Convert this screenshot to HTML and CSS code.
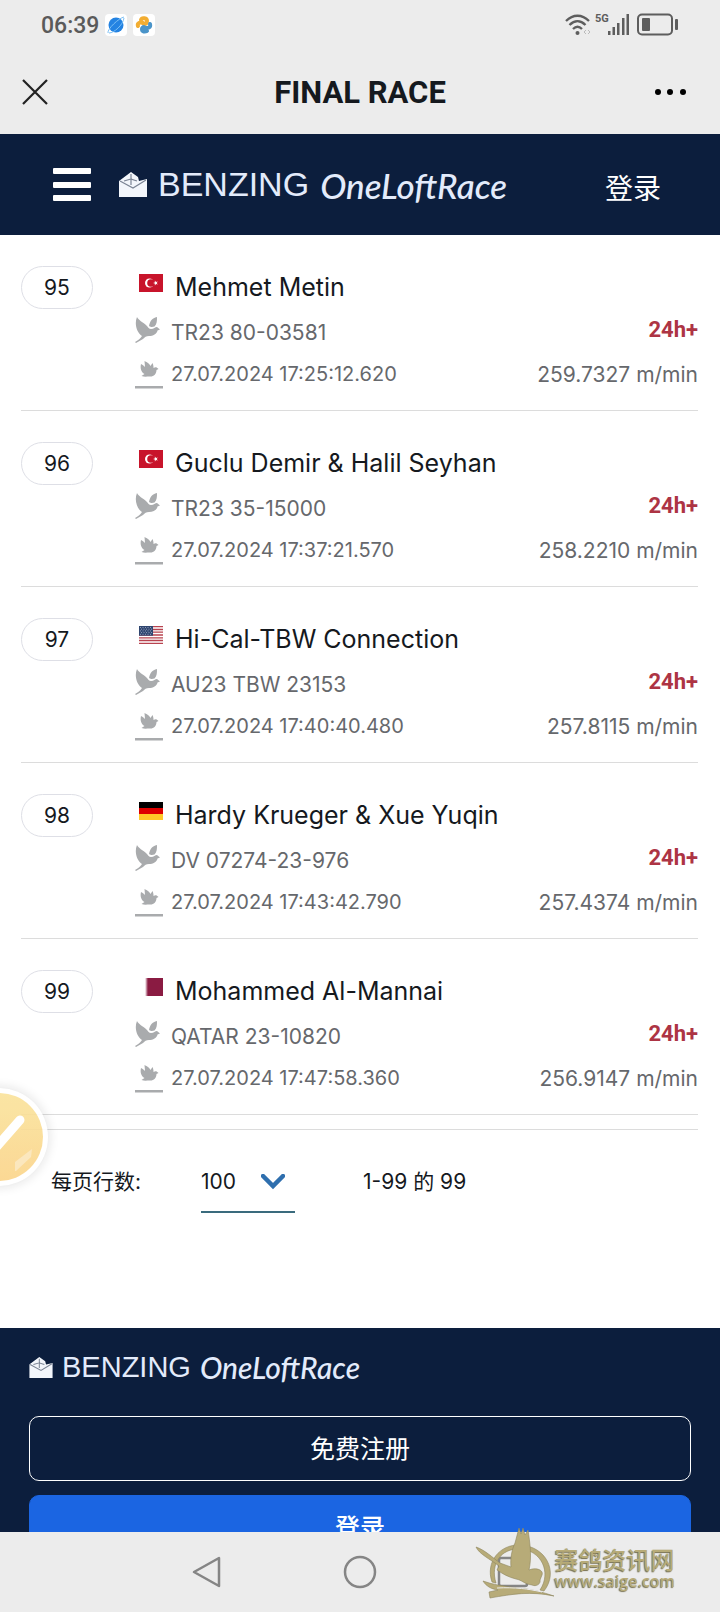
FILE: index.html
```html
<!DOCTYPE html>
<html lang="zh-CN">
<head>
<meta charset="utf-8">
<meta name="viewport" content="width=device-width, initial-scale=1">
<title>FINAL RACE</title>
<link rel="stylesheet" href="styles.css">
</head>
<body>
<svg class="symbols" aria-hidden="true">
  <symbol id="dove" viewBox="0 0 25 26">
    <path d="M2 0c1 3 6 5 10 9 1 1 2 3 4 3 3 0 4-2 6-2l3 2.500-2.500 1C22 17 18 19 14 19c-3 0-4 1-6 3l-7 4-1-1c3-2 5-3 7-6C2 16-1 7 2 0z"/>
    <path d="M22 0c0 4 0 7-2.500 9.500-2 .5-3 1-5.500-.5C15 4 17 1 22 0z"/>
  </symbol>
  <symbol id="landing" viewBox="0 0 28 29">
    <path d="M6 4c2 1 3 2 4 3l-.5-6c4 2 5 3 6 5l2-3c1 2 1 4 1 5 2-1 3-1 5 1l-2 1c0 4-3 7-7 6.500-3 0-5 .5-8-.5l3-2C6 12 5 8 6 4z"/>
    <path d="M0 26h28v2.500H0z"/>
  </symbol>
  <symbol id="turkey" viewBox="0 0 24 18">
    <path fill="#c8142b" d="M0 0h24v18H0z"/>
    <circle cx="10.500" cy="9" r="4.500" fill="#fff"/>
    <circle cx="12" cy="9" r="3.800" fill="#c8142b"/>
    <path fill="#fff" d="M14 9l1.800-.6.100-1.900 1.100 1.500 1.800-.6L17.700 9l1.100 1.600-1.800-.6-1.100 1.500-.1-1.900z"/>
  </symbol>
  <symbol id="usa" viewBox="0 0 24 18">
    <path fill="#fff" d="M0 0h24v18H0z"/>
    <path stroke="#b8434f" stroke-width="1.300" d="M0 .7h24M0 3.500h24M0 6.200h24M0 9h24M0 11.800h24M0 14.500h24M0 17.300h24"/>
    <path fill="#2f4670" d="M0 0h14v9.700H0z"/>
    <path stroke="#a9b4cc" stroke-width=".8" stroke-dasharray="1 1.500" d="M1 1.500h12.500M2 3.200h11.500M1 4.900h12.500M2 6.600h11.500M1 8.300h12.500"/>
  </symbol>
  <symbol id="germany" viewBox="0 0 24 18">
    <path d="M0 0h24v6H0z"/><path fill="#d00" d="M0 6h24v6H0z"/><path fill="#ffc928" d="M0 12h24v6H0z"/>
  </symbol>
  <symbol id="qatar" viewBox="0 0 24 18">
    <path fill="#fff" d="M0 0h24v18H0z"/>
    <path fill="#8a1b42" d="M24 0H6l3 1-3 1 3 1-3 1 3 1-3 1 3 1-3 1 3 1-3 1 3 1-3 1 3 1-3 1 3 1-3 1 3 1-3 1h18z"/>
  </symbol>
  <symbol id="loft" viewBox="0 0 28 25">
    <path fill="#f3f6fb" d="M0 9L12 0l7 5 1 4 8-2v18H0z"/>
    <path fill="none" stroke="#7b8494" stroke-width="1.200" d="M1 9l13 7 13-8M5 9l7-2v6M12 2v5l6 2"/>
  </symbol>
</svg>

<div class="screen">
  <div class="status">
    <span class="clock">06:39</span>
    <svg class="app" viewBox="0 0 22 22" aria-hidden="true"><rect width="22" height="22" rx="4" fill="#fff"/><circle cx="11" cy="11" r="7.500" fill="#2483e2"/><path d="M3 19c-1-4 11-15 16-16M4 19c5 0 14-8 15-15" fill="none" stroke="#7cc0f5" stroke-width="1"/></svg>
    <svg class="app" viewBox="0 0 22 22" aria-hidden="true"><rect width="22" height="22" rx="4" fill="#fff"/><g fill="none" stroke-width="4" stroke-linecap="round"><path stroke="#f2ad32" d="M5 12c-1-3 2-4 5-3M8 6c1-3 6-2 6 1 0 2-1 3-3 3"/><path stroke="#4a94c9" d="M17 10c1 4-2 4-5 4M14 17c-2 1-5 1-5-2 0-1 1-2 2-2"/></g></svg>
    <svg class="signals" viewBox="0 0 114 24" role="img" aria-label="Wi-Fi, 5G, battery low">
      <g fill="none" stroke="#5d5d5d" stroke-width="2.300"><path d="M1 8c7-7 16-7 23 0M4.500 12c5-5 11-5 16 0M8 16c3-3 6-3 9 0"/><rect x="73" y="1.500" width="34" height="20" rx="4" stroke-width="2"/></g>
      <g fill="#5d5d5d"><circle cx="12.500" cy="20" r="2"/><path d="M43 18h2.500v4H43zM47.500 14H50v8h-2.500zM52 10h2.500v12H52zM57 5h2.500v17H57zM61.500 1H64v21h-2.500z"/><rect x="77" y="5" width="8" height="13" rx="1"/><rect x="110" y="6" width="3" height="11" rx="1"/></g>
      <path fill="none" stroke="#bbb" d="M21 17l-2 2 2 2M23 17l2 2-2 2"/>
      <text class="network" x="30" y="9">5G</text>
    </svg>
  </div>

  <header class="titlebar">
    <button class="icon-button" aria-label="关闭"><svg width="26" height="26" viewBox="0 0 26 26"><path d="M1 1l24 24M25 1L1 25" stroke="#222" stroke-width="2.200"/></svg></button>
    <h1>FINAL RACE</h1>
    <button class="icon-button more" aria-label="更多"><svg width="32" height="8" viewBox="0 0 32 8"><circle cx="4" cy="4" r="3"/><circle cx="16" cy="4" r="3"/><circle cx="29" cy="4" r="3"/></svg></button>
  </header>

  <nav class="sitebar">
    <button class="icon-button" aria-label="菜单"><svg width="38" height="34" viewBox="0 0 38 34" fill="#fff"><rect width="38" height="6" rx="1"/><rect y="14" width="38" height="6" rx="1"/><rect y="27" width="38" height="6" rx="1"/></svg></button>
    <a class="logo" href="#"><svg viewBox="0 0 28 25" aria-hidden="true"><use href="#loft"/></svg><span>BENZING</span><span class="script">OneLoftRace</span></a>
    <a class="login" href="#">登录</a>
  </nav>

  <main class="content">
    <ol class="results">
      <li class="result">
        <span class="rank">95</span>
        <div class="details">
          <h2 class="line name"><svg class="flag" role="img" aria-label="TR"><use href="#turkey"/></svg>Mehmet Metin</h2>
          <div class="line ring"><svg class="dove" aria-hidden="true"><use href="#dove"/></svg><span>TR23 80-03581</span><strong>24h+</strong></div>
          <div class="line time"><svg class="landing" aria-hidden="true"><use href="#landing"/></svg><time>27.07.2024 17:25:12.620</time><span class="speed">259.7327 m/min</span></div>
        </div>
      </li>
      <li class="result">
        <span class="rank">96</span>
        <div class="details">
          <h2 class="line name"><svg class="flag" role="img" aria-label="TR"><use href="#turkey"/></svg>Guclu Demir &amp; Halil Seyhan</h2>
          <div class="line ring"><svg class="dove" aria-hidden="true"><use href="#dove"/></svg><span>TR23 35-15000</span><strong>24h+</strong></div>
          <div class="line time"><svg class="landing" aria-hidden="true"><use href="#landing"/></svg><time>27.07.2024 17:37:21.570</time><span class="speed">258.2210 m/min</span></div>
        </div>
      </li>
      <li class="result">
        <span class="rank">97</span>
        <div class="details">
          <h2 class="line name"><svg class="flag" role="img" aria-label="US"><use href="#usa"/></svg>Hi-Cal-TBW Connection</h2>
          <div class="line ring"><svg class="dove" aria-hidden="true"><use href="#dove"/></svg><span>AU23 TBW 23153</span><strong>24h+</strong></div>
          <div class="line time"><svg class="landing" aria-hidden="true"><use href="#landing"/></svg><time>27.07.2024 17:40:40.480</time><span class="speed">257.8115 m/min</span></div>
        </div>
      </li>
      <li class="result">
        <span class="rank">98</span>
        <div class="details">
          <h2 class="line name"><svg class="flag" role="img" aria-label="DE"><use href="#germany"/></svg>Hardy Krueger &amp; Xue Yuqin</h2>
          <div class="line ring"><svg class="dove" aria-hidden="true"><use href="#dove"/></svg><span>DV 07274-23-976</span><strong>24h+</strong></div>
          <div class="line time"><svg class="landing" aria-hidden="true"><use href="#landing"/></svg><time>27.07.2024 17:43:42.790</time><span class="speed">257.4374 m/min</span></div>
        </div>
      </li>
      <li class="result">
        <span class="rank">99</span>
        <div class="details">
          <h2 class="line name"><svg class="flag" role="img" aria-label="QA"><use href="#qatar"/></svg>Mohammed Al-Mannai</h2>
          <div class="line ring"><svg class="dove" aria-hidden="true"><use href="#dove"/></svg><span>QATAR 23-10820</span><strong>24h+</strong></div>
          <div class="line time"><svg class="landing" aria-hidden="true"><use href="#landing"/></svg><time>27.07.2024 17:47:58.360</time><span class="speed">256.9147 m/min</span></div>
        </div>
      </li>
    </ol>

    <div class="pagination">
      <label for="rows">每页行数:</label>
      <div class="picker">
        <select id="rows"><option>100</option></select>
        <svg width="24" height="16" viewBox="0 0 24 16" aria-hidden="true"><path d="M2 2l10 10L22 2" fill="none" stroke="#2f6fae" stroke-width="4.500" stroke-linecap="round"/></svg>
      </div>
      <span>1-99 的 99</span>
    </div>

    <footer class="footer">
      <a class="logo small" href="#"><svg viewBox="0 0 28 25" aria-hidden="true"><use href="#loft"/></svg><span>BENZING</span><span class="script">OneLoftRace</span></a>
      <button class="action outline">免费注册</button>
      <button class="action primary">登录</button>
    </footer>
  </main>

  <div class="system">
    <button class="icon-button" aria-label="返回"><svg width="34" height="34" viewBox="0 0 34 34"><path d="M29 3v28L4 17z"/></svg></button>
    <button class="icon-button" aria-label="主页"><svg width="34" height="34" viewBox="0 0 34 34"><circle cx="17" cy="17" r="15"/></svg></button>
    <button class="icon-button" aria-label="最近"><svg width="34" height="34" viewBox="0 0 34 34"><rect x="3" y="3" width="28" height="28" rx="2"/></svg></button>
  </div>

  <button class="floating" aria-label="完成"><svg viewBox="0 0 98 98"><defs><linearGradient id="sun" x2="0" y2="1"><stop stop-color="#fae39b"/><stop offset="1" stop-color="#fbd489"/></linearGradient></defs><circle cx="49" cy="49" r="44" fill="url(#sun)"/><path d="M30 48l13 15 27-31" fill="none" stroke="#fff" stroke-width="9" stroke-linecap="round"/><path d="M65 83V74l17-13-1 8-15 14z" fill="#fbe5b8"/></svg></button>

  <div class="watermark">
    <svg width="80" height="72" viewBox="0 0 80 72" aria-hidden="true">
      <g fill="#b7ab78" stroke="#8d845d" stroke-width=".6">
        <path fill-rule="evenodd" d="M17 54C10 34 25 16 45 17c26 1 39 27 24 46l-4-1c12-18 1-40-20-41-19-1-30 15-24 34z"/>
        <path d="M1 19c9 3 17 11 24 16l11 4c-1-8 1-18 4-24l4-15 2 6 2-6 2 7 3-5c2 13 4 27 1 40 7-3 15 0 13 5l-2 5c1 4-4 7-8 5-8-1-10-5-16-6-8-2-13-5-19-9l2-4C15 31 4 26 1 19z"/>
        <path d="M8 53c10 4 22 5 34 7 14 1 25 4 37 8-24-5-41-2-64 2l-1-6 9-2c-7-1-12-4-15-9z"/>
      </g>
      <path d="M22 60c18-1 32 1 45 4" fill="none" stroke="#ececec"/>
    </svg>
    <div class="watermark-text"><span class="watermark-name">赛鸽资讯网</span><span class="watermark-url">www.saige.com</span></div>
  </div>
</div>
</body>
</html>
```

FILE: styles.css
```css
* { box-sizing: border-box; }

body {
  margin: 0;
  background: #ececec;
  color: #15191e;
  font-family: Inter, "Noto Sans CJK SC", sans-serif;
  font-size: 21px;
}

button { font: inherit; cursor: pointer; }
a { color: inherit; text-decoration: none; }
svg { flex: none; }

.symbols { position: absolute; width: 0; height: 0; }

.screen {
  position: relative;
  display: flex;
  flex-direction: column;
  height: 100vh;
  overflow: hidden;
}

.icon-button {
  display: flex;
  padding: 0;
  border: 0;
  background: none;
}

.status {
  display: flex;
  align-items: center;
  gap: 6px;
  height: 50px;
  padding: 0 41px;
}

.clock {
  color: #5a5a5a;
  font: 500 23px Roboto, sans-serif;
}

.app { width: 22px; height: 22px; }
.signals { width: 114px; height: 24px; margin-left: auto; }
.network { fill: #5d5d5d; font: 700 11px Roboto, sans-serif; }

.titlebar {
  display: grid;
  grid-template-columns: 1fr auto 1fr;
  align-items: center;
  height: 84px;
  padding: 0 22px;
}

.titlebar h1 {
  margin: 0;
  font: 700 31px Roboto, sans-serif;
}

.more {
  justify-self: end;
  padding: 12px;
}

.sitebar {
  display: flex;
  align-items: center;
  height: 101px;
  padding: 0 59px 0 53px;
  background: #0c1e3d;
  color: #fff;
}

.logo {
  display: flex;
  align-items: center;
  gap: 11px;
  margin-left: 28px;
  color: #e3ebfb;
  font: 34px "Liberation Sans", sans-serif;
}

.logo svg { width: 28px; height: 25px; }
.logo .script { font: italic 500 35px Lato, cursive; }

.login {
  margin-left: auto;
  padding-top: 4px;
  font-size: 28px;
}

.content {
  flex: 1;
  min-height: 0;
  overflow: hidden;
  background: #fff;
}

.results {
  margin: 0;
  padding: 0 22px 0 21px;
  list-style: none;
}

.result {
  display: flex;
  align-items: flex-start;
  justify-content: space-between;
  padding: 31px 0 18px;
  border-bottom: 1px solid #dcdcdc;
}

.rank {
  width: 72px;
  border: 1px solid #dedfe6;
  border-radius: 22px;
  line-height: 41px;
  text-align: center;
}

.details {
  flex: 1;
  margin-left: 42px;
}

.line {
  display: flex;
  align-items: center;
  color: #66686c;
}

.name {
  gap: 12px;
  height: 42px;
  margin: 0;
  padding-left: 4px;
  color: #15191e;
  font-size: 25px;
  font-weight: 400;
}

.flag { width: 24px; height: 18px; margin-bottom: 9px; }

.ring { gap: 11px; height: 48px; }
.ring strong {
  margin-left: auto;
  padding-bottom: 5px;
  color: #ad3444;
  font: 700 22px Roboto, sans-serif;
}

.dove { width: 25px; height: 26px; margin-bottom: 4px; fill: #a9abad; }

.time { gap: 8px; height: 36px; }
.time time { font-size: 20px; }
.landing { width: 28px; height: 29px; fill: #a9abad; }
.speed { margin-left: auto; }

.pagination {
  display: flex;
  align-items: flex-start;
  height: 199px;
  margin: 14px 22px 0 21px;
  padding: 32px 30px;
  border-top: 1px solid #dcdcdc;
  line-height: 40px;
}

.picker {
  display: flex;
  align-items: center;
  width: 94px;
  height: 51px;
  margin: 0 68px 0 60px;
  padding-bottom: 9px;
  border-bottom: 2px solid #3a6b7d;
}

.picker select {
  width: 60px;
  padding: 0;
  border: 0;
  appearance: none;
  background: none;
  color: inherit;
  font: inherit;
}

.footer {
  display: flex;
  flex-direction: column;
  gap: 14px;
  padding: 20px 29px;
  background: #0c1e3d;
}

.logo.small {
  gap: 9px;
  height: 38px;
  margin: 0 0 16px;
  font-size: 29px;
}

.logo.small svg { width: 24px; height: 21px; }
.logo.small .script { font-size: 30px; }

.action {
  height: 65px;
  padding: 0 0 4px;
  border: 1px solid #fff;
  border-radius: 10px;
  background: none;
  color: #fff;
  font-size: 25px;
}

.primary { border-color: #1b65e2; background: #1b65e2; font-weight: 500; }

.system {
  display: flex;
  align-items: center;
  justify-content: center;
  gap: 119px;
  height: 80px;
  background: #ececec;
}

.system svg { fill: none; stroke: #858585; stroke-width: 2.5; stroke-linejoin: round; }

.floating {
  position: absolute;
  bottom: 426px;
  left: -50px;
  width: 98px;
  height: 98px;
  padding: 0;
  border: 0;
  border-radius: 50%;
  background: #fff;
  box-shadow: 0 0 12px rgba(0, 0, 0, 0.14);
  opacity: 0.9;
}

.floating svg { display: block; }

.watermark {
  position: absolute;
  right: 45px;
  bottom: 12px;
  display: flex;
  align-items: center;
  color: #b7ab78;
  text-shadow: -1px 1px 1px #77704f;
}

.watermark-text { display: flex; flex-direction: column; padding-top: 8px; }

.watermark-name {
  font: 500 24px/26px "Noto Sans CJK SC", sans-serif;
}

.watermark-url {
  font: 600 16px/18px "Open Sans", sans-serif;
}
```
